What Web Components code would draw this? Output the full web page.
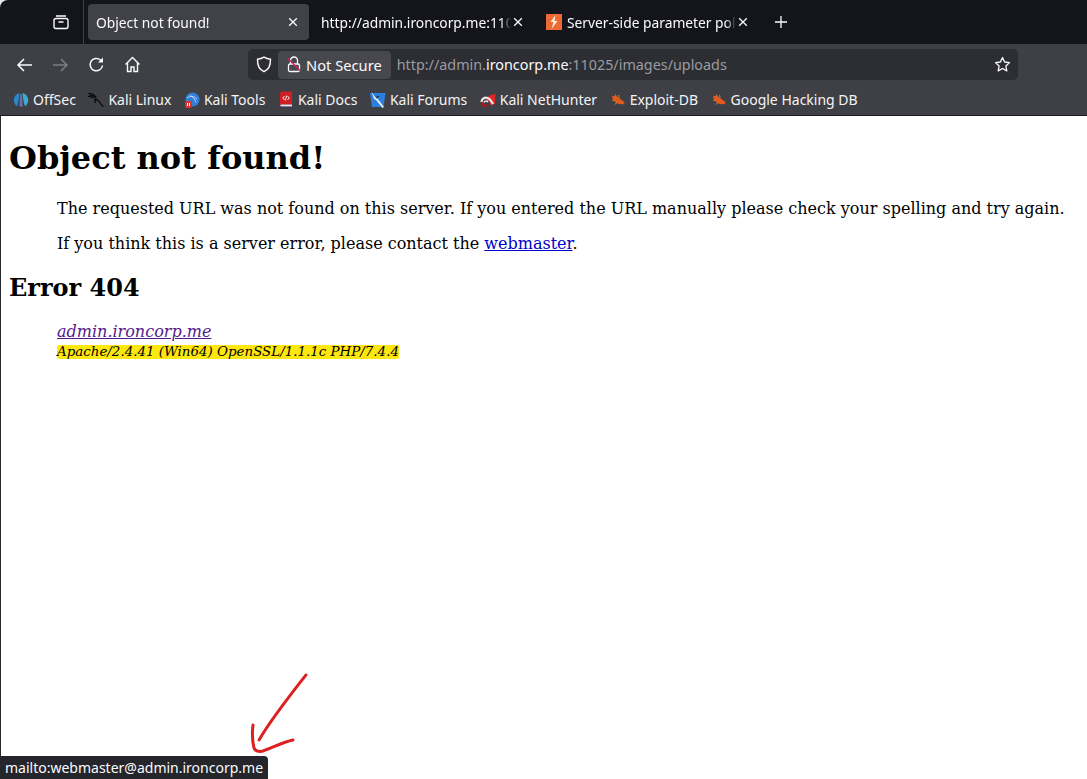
<!DOCTYPE html>
<html lang="en">
<head>
<meta charset="utf-8">
<title>Object not found!</title>
<style>
  html, body { margin: 0; height: 100%; overflow: hidden; background: #fff; }
  body { font-family: "Noto Sans", sans-serif; }
</style>
</head>
<body>
<browser-window>
  <tab-strip slot="chrome">
    <browser-tab active label="Object not found!"></browser-tab>
    <browser-tab label="http://admin.ironcorp.me:11025/images/uploads"></browser-tab>
    <browser-tab label="Server-side parameter pollution" icon="spark"></browser-tab>
  </tab-strip>
  <nav-bar slot="chrome"></nav-bar>
  <bookmark-bar slot="chrome">
    <bookmark-item icon="offsec">OffSec</bookmark-item>
    <bookmark-item icon="kali">Kali Linux</bookmark-item>
    <bookmark-item icon="tools">Kali Tools</bookmark-item>
    <bookmark-item icon="docs">Kali Docs</bookmark-item>
    <bookmark-item icon="forums">Kali Forums</bookmark-item>
    <bookmark-item icon="hunter">Kali NetHunter</bookmark-item>
    <bookmark-item icon="bug">Exploit-DB</bookmark-item>
    <bookmark-item icon="bug">Google Hacking DB</bookmark-item>
  </bookmark-bar>
  <error-page></error-page>
  <status-tip slot="overlay">mailto:webmaster@admin.ironcorp.me</status-tip>
  <red-arrow slot="overlay"></red-arrow>
</browser-window>

<script>
const ICONS = {
  offsec: `<svg viewBox="0 0 16 16" width="16" height="16">
    <path d="M6.500 1C3 1.800 .8 4.800 .8 8.300c0 2.700 1.300 4.900 3.200 6C5.400 11 6.200 6 6.500 1z" fill="#2b86c9"/>
    <path d="M9.500 1c3.500.8 5.700 3.800 5.700 7.300 0 2.700-1.300 4.900-3.200 6C10.600 11 9.800 6 9.500 1z" fill="#3ba9d6"/>
    <path d="M7.300 2h1.400l1 12.500H6.300z" fill="#6a6fb4"/></svg>`,
  kali: `<svg viewBox="0 0 18 18" width="18" height="18" fill="none" stroke="#08080a" stroke-width="1.400" stroke-linecap="round">
    <path d="M1 1.500c3 .3 6 1.500 7.500 3.800 1 1.500.4 3.200-1.500 3.300 3-.4 5.700 1.400 6.800 3.800.6 1.300 1.700 2.400 3.200 3.600"/>
    <path d="M2.500 3.500c2 .2 3.500 1 4.500 2.200M8 8.800c-.8 1-.5 2.300.5 3M.5 5c2 0 3.500.5 5 1.500"/></svg>`,
  tools: `<svg viewBox="0 0 16 16" width="16" height="16">
    <circle cx="8.500" cy="7.500" r="7" fill="#2f7fd8"/>
    <path d="M3 6c3-2.500 7-2 10 1M6 3.500c2.500 1 5 3.500 6 7" fill="none" stroke="#bcd6f2" stroke-width="1"/>
    <rect x="1" y="9" width="7" height="7" rx="2" fill="#d8342c"/>
    <path d="M3.500 11v3M5.500 11v3" stroke="#fff" stroke-width="1"/></svg>`,
  docs: `<svg viewBox="0 0 16 17" width="16" height="17">
    <path d="M2 2 3.500 .5H14v13H3.500L2 14.500z" fill="#cf1f24"/>
    <path d="M2 14.500l1.500-1H14V16H3.500z" fill="#e8e2e0"/>
    <path d="M2 15.800h12" stroke="#3a2a80" stroke-width=".8"/>
    <path d="M6.500 5 4.800 7l1.700 2M9.500 5l1.700 2-1.700 2M8.600 4.500 7.400 9.500" fill="none" stroke="#fff" stroke-width=".9"/></svg>`,
  forums: `<svg viewBox="0 0 16 16" width="16" height="16">
    <path d="M0 1h15.500L13.500 15H2z" fill="#2a7fe0"/>
    <path d="M1.500 0 5 5l2 1 7 9-1.500 1L6 8 4 7z" fill="#e8edf2"/>
    <path d="M6 6l3-2" stroke="#1d2a3a" stroke-width="1.200"/></svg>`,
  hunter: `<svg viewBox="0 0 16 16" width="16" height="16" fill="none">
    <path d="M4 6 15.500 1.500 15 12l-4 1.500-2-4z" fill="#e1262c"/>
    <path d="M1.500 10c0-3 3-5 6-4 2 .7 4 3 5.500 6" stroke="#e9e9ec" stroke-width="2.200"/>
    <path d="M1.500 10c.5 2 2 4 4 4.500l2-1.500" stroke="#b8151c" stroke-width="2"/>
    <path d="M4 10.500c.5-1.500 2.500-2 4-.5" stroke="#eee" stroke-width="1.500"/></svg>`,
  bug: `<svg viewBox="0 0 16 14" width="16" height="14">
    <path d="M2 3.500C4.500 2.500 7 3.500 9 5l5 3.800c1 .7.500 2-.5 2.200-2 .3-4.500.3-6.500-.7C4.500 9 2.500 6.500 2 3.500z" fill="#e25a1c"/>
    <path d="M5 1.500 6.500 4M8.500 2 9 5M2 7.500 5 7M5 11.500 7 9" stroke="#e5853f" stroke-width="1.200" opacity=".75"/></svg>`,
  spark: `<svg viewBox="0 0 16 16" width="16" height="16">
    <rect width="16" height="16" fill="#ee6a35"/>
    <path d="M9.500 1 4.500 8h3L5.500 15l6-8H8.500z" fill="#fdeedd"/></svg>`
};

const tabTemplate = document.createElement('template');
tabTemplate.innerHTML = `
  <style>
    :host {
      display: flex;
      align-items: center;
      box-sizing: border-box;
      width: 221px;
      height: 36px;
      padding: 0 11px 0 8px;
      border-radius: 4px;
      color: #fbfbfe;
      font-size: 13.800px;
    }
    :host([active]) { background: #414249; }
    .ic { display: none; margin-right: 5px; flex: none; height: 16px; }
    :host([icon]) .ic { display: block; }
    .label {
      flex: 1;
      min-width: 0;
      white-space: nowrap;
      overflow: hidden;
      -webkit-mask-image: linear-gradient(to left, transparent 0, #000 10px);
      mask-image: linear-gradient(to left, transparent 0, #000 10px);
    }
    svg.close { flex: none; margin-left: 2px; }
  </style>
  <span class="ic"></span>
  <span class="label"></span>
  <svg class="close" width="10" height="10" viewBox="0 0 10 10"><path d="M1.200 1.200l7.600 7.600M8.800 1.200 1.200 8.800" stroke="#fbfbfe" stroke-width="1.300"/></svg>
`;

class BrowserTab extends HTMLElement {
  constructor() {
    super();
    this._shadowRoot = this.attachShadow({ mode: 'open' });
    this._shadowRoot.appendChild(tabTemplate.content.cloneNode(true));
    this.$label = this._shadowRoot.querySelector('.label');
    this.$ic = this._shadowRoot.querySelector('.ic');
  }

  connectedCallback() {
    this.$label.textContent = this.getAttribute('label');
    const icon = this.getAttribute('icon');
    if (icon) this.$ic.innerHTML = ICONS[icon];
  }
}

const stripTemplate = document.createElement('template');
stripTemplate.innerHTML = `
  <style>
    :host {
      display: flex;
      align-items: center;
      box-sizing: border-box;
      height: 44px;
      background: #14151c;
      position: relative;
    }
    .views {
      flex: none;
      width: 84px;
      height: 44px;
      box-sizing: border-box;
      padding-left: 52px;
      border-right: 1px solid #3f4045;
      display: flex;
      align-items: center;
    }
    .tabs { display: flex; align-items: center; margin-left: 4px; gap: 4px; }
    .plus { margin-left: 15px; flex: none; }
    /* window corner of the desktop behind */
    .corner {
      position: absolute;
      left: 0;
      top: 0;
      width: 8px;
      height: 8px;
      background: #e8e8e8;
    }
    .corner::after {
      content: '';
      position: absolute;
      inset: 0;
      background: #14151c;
      border-top-left-radius: 8px;
    }
  </style>
  <div class="corner"></div>
  <div class="views">
    <svg width="18" height="18" viewBox="0 0 18 18" fill="none" stroke="#fbfbfe" stroke-width="1.400">
      <rect x="2" y="5.500" width="14" height="10" rx="2"/>
      <path d="M4 3h10M6.500 9h5"/>
    </svg>
  </div>
  <div class="tabs"><slot></slot></div>
  <svg class="plus" width="14" height="14" viewBox="0 0 14 14"><path d="M7 1v12M1 7h12" stroke="#fbfbfe" stroke-width="1.300"/></svg>
`;

class TabStrip extends HTMLElement {
  constructor() {
    super();
    this.attachShadow({ mode: 'open' }).appendChild(stripTemplate.content.cloneNode(true));
  }
}

const navTemplate = document.createElement('template');
navTemplate.innerHTML = `
  <style>
    :host {
      display: flex;
      align-items: center;
      box-sizing: border-box;
      height: 43px;
      padding: 0 69px 2px 16px;
      background: #3f4045;
    }
    .btns { display: flex; align-items: center; gap: 19px; width: 232px; flex: none; }
    svg { flex: none; display: block; }
    .url {
      flex: 1;
      height: 31px;
      display: flex;
      align-items: center;
      box-sizing: border-box;
      background: #2d2e33;
      border-radius: 5px;
      padding: 2px 7px 2px 8px;
      font-size: 14.350px;
      color: #9a9ba0;
      white-space: nowrap;
    }
    .sec {
      height: 28px;
      display: flex;
      align-items: center;
      gap: 5px;
      box-sizing: border-box;
      margin-left: 6px;
      padding: 0 9px;
      background: #47484e;
      border-radius: 4px;
      color: #fbfbfe;
      margin-right: 6px;
      font-size: 14.700px;
    }
    .addr { flex: 1; }
    .addr b { font-weight: 400; color: #fbfbfe; }
  </style>
  <div class="btns">
    <svg width="17" height="16" viewBox="0 0 17 16" fill="none" stroke="#fbfbfe" stroke-width="1.500"><path d="M16 8H2M8 2 2 8l6 6"/></svg>
    <svg width="17" height="16" viewBox="0 0 17 16" fill="none" stroke="#7c7d82" stroke-width="1.500"><path d="M1 8h14M9 2l6 6-6 6"/></svg>
    <svg width="17" height="17" viewBox="0 0 17 17" fill="none" stroke="#fbfbfe" stroke-width="1.500"><path d="M14.500 9.500a6.200 6.200 0 1 1-2-5.500l2 1.800"/><path d="M15 1.500v5h-5z" fill="#fbfbfe" stroke="none"/></svg>
    <svg width="17" height="17" viewBox="0 0 17 17" fill="none" stroke="#fbfbfe" stroke-width="1.400"><path d="M1.500 8.500 8.500 1.500l7 7M3.500 7v8.500h3.500V11h3v4.500h3.500V7"/></svg>
  </div>
  <div class="url">
    <svg width="16" height="17" viewBox="0 0 16 17" fill="none" stroke="#fbfbfe" stroke-width="1.400"><path d="M8 1.200c2 1.300 4.200 1.900 6.500 2 .2 6-2 10.500-6.500 12.500-4.500-2-6.700-6.500-6.500-12.500 2.300-.1 4.500-.7 6.500-2z"/></svg>
    <div class="sec">
      <svg width="14" height="17" viewBox="0 0 14 17" fill="none"><path d="M3.500 8V4.500a3.500 3.500 0 0 1 7 0V8" stroke="#fbfbfe" stroke-width="1.300"/><rect x="1.500" y="8" width="11" height="7.500" rx="1.500" stroke="#fbfbfe" stroke-width="1.300"/><path d="M1 2.500l12 12" stroke="#d81e5b" stroke-width="1.400"/></svg>
      <span>Not Secure</span>
    </div>
    <span class="addr">http://admin.<b>ironcorp.me</b>:11025/images/uploads</span>
    <svg width="17" height="17" viewBox="0 0 17 17" fill="none" stroke="#fbfbfe" stroke-width="1.300"><path d="M8.500 1.500l2.100 4.500 4.900.6-3.600 3.400.9 4.900-4.300-2.400-4.300 2.400.9-4.900L1.500 6.600 6.400 6z" stroke-linejoin="round"/></svg>
  </div>
`;

class NavBar extends HTMLElement {
  constructor() {
    super();
    this.attachShadow({ mode: 'open' }).appendChild(navTemplate.content.cloneNode(true));
  }
}

const barTemplate = document.createElement('template');
barTemplate.innerHTML = `
  <style>
    :host {
      display: flex;
      align-items: center;
      box-sizing: border-box;
      height: 29px;
      padding: 0 0 3px 13px;
      gap: 12.500px;
      background: #3f4045;
      border-bottom: 1px solid #1c1c20;
    }
  </style>
  <slot></slot>
`;

class BookmarkBar extends HTMLElement {
  constructor() {
    super();
    this.attachShadow({ mode: 'open' }).appendChild(barTemplate.content.cloneNode(true));
  }
}

const itemTemplate = document.createElement('template');
itemTemplate.innerHTML = `
  <style>
    :host {
      display: inline-flex;
      align-items: center;
      gap: 4px;
      color: #f4f4f6;
      font-size: 14px;
      white-space: nowrap;
    }
    .ic { display: flex; align-items: center; flex: none; width: 16px; height: 16px; }
  </style>
  <span class="ic"></span><slot></slot>
`;

class BookmarkItem extends HTMLElement {
  constructor() {
    super();
    this._shadowRoot = this.attachShadow({ mode: 'open' });
    this._shadowRoot.appendChild(itemTemplate.content.cloneNode(true));
  }

  connectedCallback() {
    this._shadowRoot.querySelector('.ic').innerHTML = ICONS[this.getAttribute('icon')];
  }
}

const pageTemplate = document.createElement('template');
pageTemplate.innerHTML = `
  <style>
    :host {
      display: block;
      flex: 1;
      box-sizing: border-box;
      padding: 0 8px;
      background: #fff;
      color: #000;
      font: 16px/normal "DejaVu Serif", serif;
      border-left: 1px solid #2a2a2e;
      overflow: hidden;
    }
    h1 { font-size: 32px; font-weight: 700; margin: 23px 0 22px; }
    h2 { font-size: 24px; font-weight: 700; margin: 20px 0 20px; }
    p, address { margin-left: 48px; }
    p { margin-top: 16px; margin-bottom: 16px; white-space: nowrap; }
    a:link { color: #0000cc; }
    a.seen { color: #551a8b; }
    address { font-style: italic; }
    address span {
      display: inline-block;
      font-size: 13.420px;
      line-height: 13px;
      padding-bottom: 1px;
      background: #fee70f;
      border-radius: 2px;
    }
  </style>
  <h1>Object not found!</h1>
  <p>The requested URL was not found on this server. If you entered the URL manually please check your spelling and try again.</p>
  <p>If you think this is a server error, please contact the <a href="#">webmaster</a>.</p>
  <h2>Error 404</h2>
  <address>
    <a class="seen" href="#">admin.ironcorp.me</a><br>
    <span>Apache/2.4.41 (Win64) OpenSSL/1.1.1c PHP/7.4.4</span>
  </address>
`;

class ErrorPage extends HTMLElement {
  constructor() {
    super();
    this.attachShadow({ mode: 'open' }).appendChild(pageTemplate.content.cloneNode(true));
  }
}

const tipTemplate = document.createElement('template');
tipTemplate.innerHTML = `
  <style>
    :host {
      position: absolute;
      left: 0;
      bottom: 0;
      height: 23px;
      display: flex;
      align-items: center;
      padding: 0 5px;
      background: #25262b;
      color: #fbfbfe;
      font-size: 14px;
      border-top-right-radius: 4px;
      white-space: nowrap;
    }
  </style>
  <slot></slot>
`;

class StatusTip extends HTMLElement {
  constructor() {
    super();
    this.attachShadow({ mode: 'open' }).appendChild(tipTemplate.content.cloneNode(true));
  }
}

const arrowTemplate = document.createElement('template');
arrowTemplate.innerHTML = `
  <style>
    :host { position: absolute; left: 245px; top: 670px; width: 70px; height: 90px; }
    svg { display: block; }
  </style>
  <svg width="70" height="90" viewBox="0 0 70 90" fill="none" stroke="#dd1f1f" stroke-width="3" stroke-linecap="round" stroke-linejoin="round">
    <path d="M61 5C46 24 27 48 14 70"/>
    <path d="M8 55c-1 8-1 15 1 23 1 3 5 4 9 3 9-3 20-9 30-11"/>
  </svg>
`;

class RedArrow extends HTMLElement {
  constructor() {
    super();
    this.attachShadow({ mode: 'open' }).appendChild(arrowTemplate.content.cloneNode(true));
  }
}

const windowTemplate = document.createElement('template');
windowTemplate.innerHTML = `
  <style>
    :host {
      display: flex;
      flex-direction: column;
      position: relative;
      width: 100%;
      height: 100vh;
      overflow: hidden;
    }
    header { flex: none; }
  </style>
  <header><slot name="chrome"></slot></header>
  <slot></slot>
  <slot name="overlay"></slot>
`;

class BrowserWindow extends HTMLElement {
  constructor() {
    super();
    this.attachShadow({ mode: 'open' }).appendChild(windowTemplate.content.cloneNode(true));
  }
}

customElements.define('browser-tab', BrowserTab);
customElements.define('tab-strip', TabStrip);
customElements.define('nav-bar', NavBar);
customElements.define('bookmark-bar', BookmarkBar);
customElements.define('bookmark-item', BookmarkItem);
customElements.define('error-page', ErrorPage);
customElements.define('status-tip', StatusTip);
customElements.define('red-arrow', RedArrow);
customElements.define('browser-window', BrowserWindow);
</script>
</body>
</html>
